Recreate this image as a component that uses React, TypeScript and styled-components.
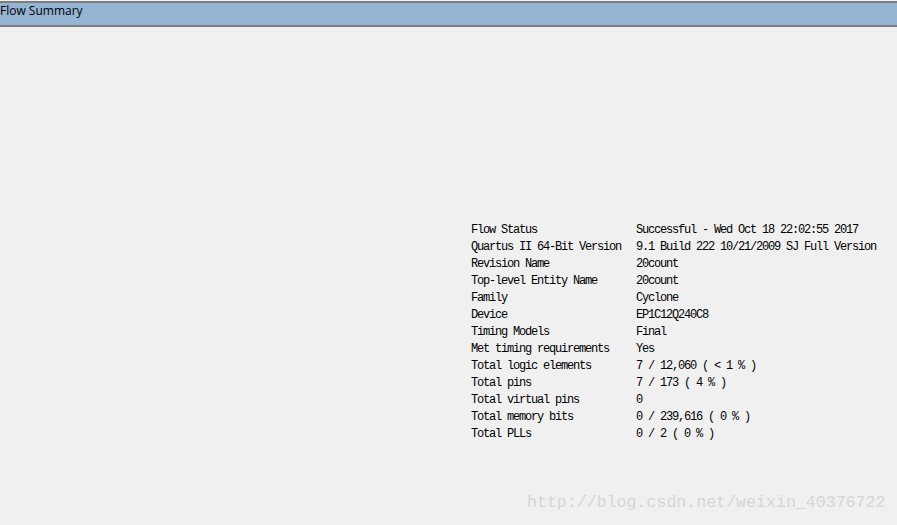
import { Fragment } from 'react';
import styled, { createGlobalStyle } from 'styled-components';

const GlobalStyle = createGlobalStyle`
  html, body {
    margin: 0;
    padding: 0;
    background: #f0f0f0;
  }
  #root {
    width: 897px;
    height: 525px;
  }
`;

export const Page = styled.div`
  position: relative;
  width: 897px;
  height: 525px;
  background: #f0f0f0;
  overflow: hidden;
  display: flex;
  flex-direction: column;
`;

export const TitleBar = styled.div`
  height: 22px;
  margin-top: 1px;
  border-top: 2px solid #7d7d7d;
  border-bottom: 2px solid #7d7d7d;
  background: #95b3d2;
  display: flex;
  align-items: flex-start;
  font-family: "Open Sans", "Liberation Sans", sans-serif;
  font-size: 12px;
  line-height: 16px;
  color: #000;
`;

export const Body = styled.div`
  flex: 1;
  display: flex;
  padding: 194px 0 0 471px;
`;

export const SummaryTable = styled.div`
  display: grid;
  grid-template-columns: 165px auto;
  grid-auto-rows: 17px;
  font-family: "Liberation Mono", "DejaVu Sans Mono", monospace;
  font-size: 12px;
  letter-spacing: -1.2px;
  color: #000;
  align-items: center;
`;

export const Cell = styled.div`
  white-space: pre;
`;

export const Watermark = styled.div`
  position: absolute;
  left: 527px;
  top: 493px;
  font-family: "Liberation Mono", "DejaVu Sans Mono", monospace;
  font-size: 16.6px;
  color: #d6d6d4;
  white-space: pre;
`;

const rows: [string, string][] = [
  ['Flow Status', 'Successful - Wed Oct 18 22:02:55 2017'],
  ['Quartus II 64-Bit Version', '9.1 Build 222 10/21/2009 SJ Full Version'],
  ['Revision Name', '20count'],
  ['Top-level Entity Name', '20count'],
  ['Family', 'Cyclone'],
  ['Device', 'EP1C12Q240C8'],
  ['Timing Models', 'Final'],
  ['Met timing requirements', 'Yes'],
  ['Total logic elements', '7 / 12,060 ( < 1 % )'],
  ['Total pins', '7 / 173 ( 4 % )'],
  ['Total virtual pins', '0'],
  ['Total memory bits', '0 / 239,616 ( 0 % )'],
  ['Total PLLs', '0 / 2 ( 0 % )'],
];

export default function App() {
  return (
    <Page>
      <GlobalStyle />
      <TitleBar>Flow Summary</TitleBar>
      <Body>
        <SummaryTable>
          {rows.map(([k, v]) => (
            <Fragment key={k}>
              <Cell>{k}</Cell>
              <Cell>{v}</Cell>
            </Fragment>
          ))}
        </SummaryTable>
      </Body>
      <Watermark>http://blog.csdn.net/weixin_40376722</Watermark>
    </Page>
  );
}
